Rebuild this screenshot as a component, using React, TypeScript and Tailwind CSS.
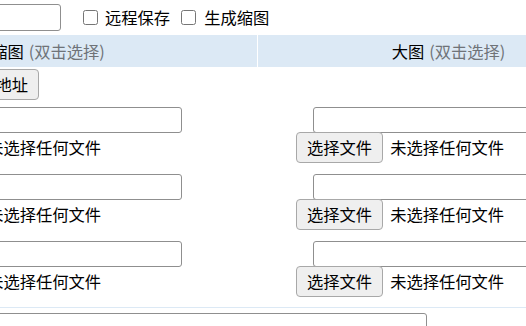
import React from 'react'

const btn =
  'h-[31px] px-[10px] border border-[#a8a8a8] rounded-[4px] bg-[#efefef] text-[16.3px] leading-[25px] text-black whitespace-nowrap'
const field = 'h-[26px] border border-[#8f8f8f] rounded-[3px] bg-white'

function FileBlock({ indent, inputWidth }: { indent: number; inputWidth: number }) {
  return (
    <div className="flex flex-col h-[67px]">
      <div className={field} style={{ marginLeft: indent + 17, width: inputWidth }} />
      <div className="flex items-center gap-[7px] -mt-px" style={{ marginLeft: indent }}>
        <button type="button" className={btn}>选择文件</button>
        <span className="whitespace-nowrap">未选择任何文件</span>
      </div>
    </div>
  )
}

export default function App() {
  return (
    <div className="w-[526px] h-[326px] overflow-hidden bg-white text-[16.3px] text-black font-['Noto_Sans_CJK_SC','Noto_Sans',sans-serif]">
      <div className="ml-[-161px] w-[800px]">
        <div className="flex items-center h-[35px]">
          <div className={`${field} ml-[42px] w-[180px] h-[27px]`} />
          <label className="flex items-center ml-[22px] gap-[7px]">
            <input type="checkbox" className="w-[15px] h-[15px] m-0" />
            <span>远程保存</span>
          </label>
          <label className="flex items-center ml-[11px] gap-[8px]">
            <input type="checkbox" className="w-[15px] h-[15px] m-0" />
            <span>生成缩图</span>
          </label>
        </div>

        <div className="flex h-[32px] gap-px">
          <div className="w-[418px] bg-[#dce9f5] flex items-center justify-center">
            缩图 <span className="ml-[5px] text-[#6f7378]">(双击选择)</span>
          </div>
          <div className="w-[381px] bg-[#dce9f5] flex items-center justify-center">
            大图 <span className="ml-[5px] text-[#6f7378]">(双击选择)</span>
          </div>
        </div>

        <div className="flex gap-px">
          <div className="w-[418px] flex flex-col">
            <div className="h-[40px] pt-[2px]">
              <button type="button" className={`${btn} ml-[113px]`}>获取地址</button>
            </div>
            <FileBlock indent={54} inputWidth={272} />
            <FileBlock indent={54} inputWidth={272} />
            <FileBlock indent={54} inputWidth={272} />
          </div>
          <div className="w-[381px] flex flex-col">
            <div className="h-[40px]" />
            <FileBlock indent={38} inputWidth={272} />
            <FileBlock indent={38} inputWidth={272} />
            <FileBlock indent={38} inputWidth={272} />
          </div>
        </div>

        <div className="h-px bg-[#dce9f5] mt-[-1px]" />
        <div className={`${field} ml-[60px] w-[528px] mt-[5px]`} />
      </div>
    </div>
  )
}
